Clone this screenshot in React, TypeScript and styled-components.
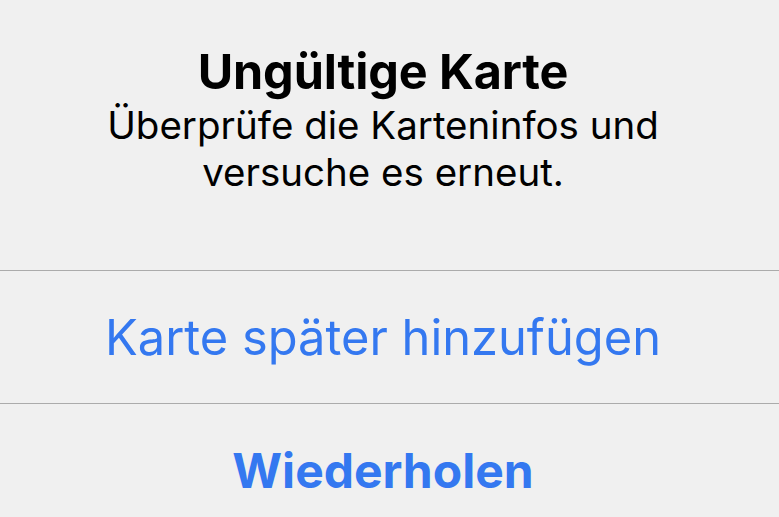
import React from "react";
import styled, { createGlobalStyle } from "styled-components";

const GlobalStyle = createGlobalStyle`
  html, body {
    margin: 0;
    padding: 0;
    background: #f0f0f0;
    overflow: hidden;
  }
`;

const Sheet = styled.div`
  width: 779px;
  height: 517px;
  background: #f0f0f0;
  font-family: Inter, "Noto Sans", sans-serif;
  display: flex;
  flex-direction: column;
  overflow: hidden;
`;

const Header = styled.header`
  flex: 0 0 271px;
  box-sizing: border-box;
  padding: 44px 13px 0 0;
  display: flex;
  flex-direction: column;
  align-items: center;
  text-align: center;
  border-bottom: 1px solid #ababab;
`;

const Title = styled.h1`
  margin: 0;
  font-size: 48.5px;
  font-weight: 700;
  line-height: 56px;
  letter-spacing: -0.1px;
  color: #000;
`;

const Message = styled.p`
  margin: 2px 0 0;
  font-size: 38.5px;
  font-weight: 400;
  line-height: 47px;
  color: #000;
`;

const Action = styled.button<{ $strong?: boolean }>`
  flex: 0 0 133px;
  width: 100%;
  box-sizing: border-box;
  border: none;
  border-bottom: 1px solid #ababab;
  background: transparent;
  font-family: inherit;
  font-size: ${(p) => (p.$strong ? 48 : 48.8)}px;
  font-weight: ${(p) => (p.$strong ? 700 : 400)};
  color: #3478f0;
  cursor: pointer;
  padding: 0 13px 0 0;
`;

export default function App() {
  return (
    <Sheet>
      <GlobalStyle />
      <Header>
        <Title>Ungültige Karte</Title>
        <Message>
          Überprüfe die Karteninfos und
          <br />
          versuche es erneut.
        </Message>
      </Header>
      <Action>Karte später hinzufügen</Action>
      <Action $strong>Wiederholen</Action>
    </Sheet>
  );
}
